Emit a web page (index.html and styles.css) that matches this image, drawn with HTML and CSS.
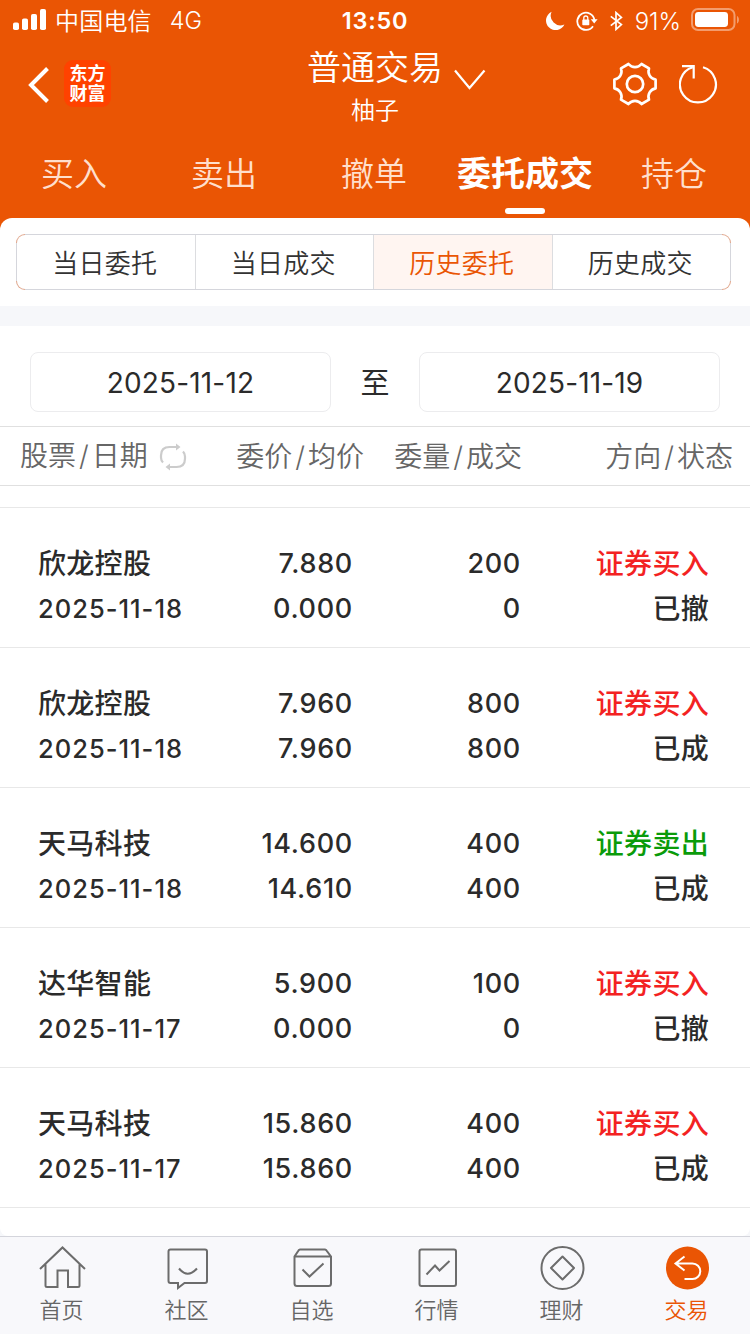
FILE: index.html
```html
<!DOCTYPE html>
<html lang="zh-CN">
<head>
    <meta charset="utf-8">
    <meta name="viewport" content="width=device-width, initial-scale=1.0">
    <title>普通交易</title>
    <link rel="stylesheet" href="styles.css">
</head>

<body>
    <header class="top">
        <div class="status">
            <div class="status-l">
                <svg width="34" height="22" viewBox="0 0 34 22" fill="#fff"><rect x="0" y="13.5" width="6" height="7.5" rx="1.8"/><rect x="9" y="9.5" width="6" height="11.5" rx="1.8"/><rect x="18" y="5" width="6" height="16" rx="1.8"/><rect x="27" y="0" width="6" height="21" rx="1.8"/></svg>
                <span class="carrier">中国电信</span>
                <span class="net">4G</span>
            </div>
            <span class="clock">13:50</span>
            <div class="status-r">
                <svg class="moon" width="20" height="20" viewBox="0 0 20 20"><path d="M6.6 .8A9.600 9.600 0 1 0 19.400 13.400A9.600 9.600 0 0 1 6.600 .8z" fill="#fff"/></svg>
                <svg class="lock" width="22" height="20" viewBox="0 0 22 20" fill="none" stroke="#fff" stroke-width="1.8"><path d="M17 15.200A8.600 8.600 0 1 1 18.400 9"/><path d="M14.800 8.200h6.800l-3.400 4.400z" fill="#fff" stroke="none"/><rect x="6.300" y="8.600" width="7" height="5.600" rx=".8" fill="#fff" stroke="none"/><path d="M7.800 9V7a2 2 0 0 1 4 0v2" stroke-width="1.3"/></svg>
                <svg class="bt" width="13" height="20" viewBox="0 0 13 20" fill="none" stroke="#fff" stroke-width="1.7"><path d="M.8 5.400l10.600 8.200-5.400 4.800V1.600l5.400 4.800L.8 14.600"/></svg>
                <span class="pct">91%</span>
                <svg width="49" height="24" viewBox="0 0 49 24"><rect x="1" y="1" width="42.500" height="21" rx="6" fill="none" stroke="#fff" stroke-opacity=".42" stroke-width="2"/><rect x="4" y="4" width="33" height="15" rx="3.400" fill="#fff"/><path d="M46 8v7.500c2.600-1 2.600-6.500 0-7.500z" fill="#fff" fill-opacity=".42"/></svg>
            </div>
        </div>
        <div class="nav">
            <div class="nav-l">
                <svg width="22" height="36" viewBox="0 0 22 36" fill="none" stroke="#fff" stroke-width="4"><path d="M19.500 1.500L3 18l16.500 16.500"/></svg>
                <div class="logo"><span>东方</span><span>财富</span></div>
            </div>
            <div class="nav-c">
                <h1>普通交易</h1>
                <p>柚子</p>
                <svg class="caret" width="32" height="22" viewBox="0 0 32 22" fill="none" stroke="#fff" stroke-width="2.200"><path d="M1 1.500L15.500 19 30.500 1.500"/></svg>
            </div>
            <div class="nav-r">
                <svg width="46" height="46" viewBox="-23 -23 46 46" fill="none" stroke="#fff" stroke-width="2.700" stroke-linejoin="round"><circle r="8.200"/><path d="M-6.500 -20C-3 -15.800 3 -15.800 6.500 -20L14 -15.600C12.200 -10.300 15.300 -5.300 20.600 -4.300V4.300C15.300 5.300 12.200 10.300 14 15.600L6.500 20C3 15.800 -3 15.800 -6.500 20L-14 15.600C-12.200 10.300 -15.300 5.300 -20.600 4.300V-4.300C-15.300 -5.300 -12.200 -10.300 -14 -15.600Z"/></svg>
                <svg width="40" height="40" viewBox="0 0 40 40" fill="none" stroke="#fff" stroke-width="2.200"><path d="M24 3.200A18 18 0 1 1 13.800 3.200"/><path d="M3 2.200h11.700V14.500"/></svg>
            </div>
        </div>
        <nav class="tabs">
            <a>买入</a>
            <a>卖出</a>
            <a>撤单</a>
            <a class="on">委托成交</a>
            <a>持仓</a>
        </nav>
    </header>

    <main class="panel">
        <div class="seg">
            <button>当日委托</button>
            <button>当日成交</button>
            <button class="on">历史委托</button>
            <button>历史成交</button>
        </div>
        <div class="gap"></div>
        <div class="dates">
            <div class="date">2025-11-12</div>
            <span>至</span>
            <div class="date">2025-11-19</div>
        </div>
        <div class="thead">
            <div class="h-name">股票<i>/</i>日期
                <svg width="28" height="28" viewBox="0 0 28 28" fill="none" stroke="#ccc" stroke-width="2.200"><path d="M4 19.500Q2 17.500 2 14.500V12.500Q2 4 10.500 4H18M24 8.500Q26 10.500 26 13.500V15.500Q26 24 17.500 24H10"/><path d="M17 .5l4.500 3.500-4.500 3.500zM11 20.500l-4.500 3.500 4.500 3.500z" fill="#ccc" stroke="none"/></svg>
            </div>
            <div class="h-price">委价<i>/</i>均价</div>
            <div class="h-qty">委量<i>/</i>成交</div>
            <div class="h-dir">方向<i>/</i>状态</div>
        </div>
        <ul class="list">
            <li class="row">
                <div class="name"><b>欣龙控股</b><em>2025-11-18</em></div>
                <div class="num">7.880<br>0.000</div>
                <div class="num">200<br>0</div>
                <div class="dir"><b class="buy">证券买入</b><b>已撤</b></div>
            </li>
            <li class="row">
                <div class="name"><b>欣龙控股</b><em>2025-11-18</em></div>
                <div class="num">7.960<br>7.960</div>
                <div class="num">800<br>800</div>
                <div class="dir"><b class="buy">证券买入</b><b>已成</b></div>
            </li>
            <li class="row">
                <div class="name"><b>天马科技</b><em>2025-11-18</em></div>
                <div class="num">14.600<br>14.610</div>
                <div class="num">400<br>400</div>
                <div class="dir"><b class="sell">证券卖出</b><b>已成</b></div>
            </li>
            <li class="row">
                <div class="name"><b>达华智能</b><em>2025-11-17</em></div>
                <div class="num">5.900<br>0.000</div>
                <div class="num">100<br>0</div>
                <div class="dir"><b class="buy">证券买入</b><b>已撤</b></div>
            </li>
            <li class="row">
                <div class="name"><b>天马科技</b><em>2025-11-17</em></div>
                <div class="num">15.860<br>15.860</div>
                <div class="num">400<br>400</div>
                <div class="dir"><b class="buy">证券买入</b><b>已成</b></div>
            </li>
        </ul>
    </main>

    <footer class="bar">
        <a>
            <svg width="48" height="46" viewBox="0 0 48 46"><path d="M2 24L24.500 2.500 47 24M7.500 19.500V40.500q0 1.500 1.500 1.500H19.500V25.500H30V42H40q1.500 0 1.500-1.500V19.500"/></svg>
            首页
        </a>
        <a>
            <svg width="48" height="46" viewBox="0 0 48 46"><path d="M7.500 4.500H42q2 0 2 2V36q0 2-2 2H21.500L15 43V38H7.500q-2 0-2-2V6.500q0-2 2-2M16 23.500q8.500 10.500 18 0"/></svg>
            社区
        </a>
        <a>
            <svg width="48" height="46" viewBox="0 0 48 46"><path d="M6.500 11.500L10.500 5.500Q11 4.500 12 4.500H37q1 0 1.500 1L43 11.500V38.500q0 2.500-2.500 2.500H9Q6.500 41 6.500 38.500ZM6.500 11.500H43M14.500 24.500l7 7L35.500 18.500"/></svg>
            自选
        </a>
        <a>
            <svg width="48" height="46" viewBox="0 0 48 46"><rect x="6.500" y="4.500" width="36.500" height="36.500" rx="2"/><path d="M13.500 29.500L22 20.500 26.500 25.500 36.500 16"/></svg>
            行情
        </a>
        <a>
            <svg width="48" height="46" viewBox="0 0 48 46"><circle cx="24.500" cy="23" r="21"/><path d="M24.500 11.500L36 23 24.500 34.500 13 23Z" stroke-linejoin="round"/></svg>
            理财
        </a>
        <a class="on">
            <svg width="48" height="46" viewBox="0 0 48 46"><circle cx="24.500" cy="23" r="21.500" fill="#ea5504" stroke="none"/><path d="M21.500 11.500L12.500 18.500 21.500 25.500M12.500 18.500H29.500a7.800 7.800 0 0 1 0 15.600H21.500" stroke="#fff"/></svg>
            交易
        </a>
    </footer>
</body>

</html>
```

FILE: styles.css
```css
html, body {
    height: 100%;
}
body {
    margin: 0;
    display: flex;
    flex-direction: column;
    overflow: hidden;
    background: linear-gradient(#ea5504 50%, #f6f7fa 50%);
    color: #2b2b2b;
    font-family: Inter, "Noto Sans CJK SC", sans-serif;
}
svg { display: block; flex: none; }
i, em { font-style: normal; }
h1, p, ul { margin: 0; padding: 0; font-weight: 350; }

.top {
    flex: none;
    height: 218px;
    color: #fff;
}

.status {
    height: 40px;
    display: grid;
    grid-template-columns: 1fr auto 1fr;
    align-items: center;
    font-size: 24px;
}
.status-l, .status-r {
    display: flex;
    align-items: center;
}
.status-l { padding-left: 13px; }
.status-l svg { margin-top: -1px; }
.status-r { justify-content: flex-end; padding-right: 10px; }
.carrier { margin-left: 8px; margin-top: -1px; font-weight: 350; letter-spacing: .2px; }
.net { margin-left: 18px; margin-top: 1px; font-weight: 350; font-size: 23.5px; }
.clock { margin-top: 1px; font-weight: 600; font-size: 23.5px; letter-spacing: .8px; }
.moon { margin-right: 11px; margin-top: 2px; }
.lock { margin-right: 12px; margin-top: 2px; }
.bt { margin-right: 12px; margin-top: 2px; }
.pct { margin-right: 10px; margin-top: 2px; font-weight: 350; }

.nav {
    height: 90px;
    display: grid;
    grid-template-columns: 1fr auto 1fr;
}
.nav-l {
    display: flex;
    align-items: center;
    padding-left: 28px;
    gap: 14px;
}
.nav-l svg { margin-top: -1px; }
.logo {
    width: 47px;
    height: 47px;
    margin-top: -3px;
    box-sizing: border-box;
    border-radius: 9px;
    background: #ff4200;
    display: flex;
    flex-direction: column;
    align-items: center;
    justify-content: center;
    font-size: 18px;
    line-height: 20px;
    font-weight: 700;
}
.nav-c {
    position: relative;
    padding-top: 1px;
    text-align: center;
}
.nav-c h1 {
    font-size: 34px;
    line-height: 54px;
}
.nav-c p {
    font-size: 24px;
    line-height: 32px;
}
.caret {
    position: absolute;
    left: 147px;
    top: 29px;
}
.nav-r {
    display: flex;
    align-items: center;
    justify-content: flex-end;
    gap: 21px;
    padding: 0 31px 2px 0;
}

.tabs {
    height: 88px;
    display: flex;
}
.tabs a {
    flex: 1;
    display: flex;
    flex-direction: column;
    align-items: center;
    font-size: 33px;
    line-height: 88px;
    height: 86px;
    margin-left: -1px;
    margin-right: 1px;
    font-weight: 350;
    white-space: nowrap;
    color: #ffdfcc;
}
.tabs .on {
    margin: 0;
    font-size: 34px;
    font-weight: 700;
    color: #fff;
}
.tabs .on:after {
    content: "";
    flex: none;
    width: 40px;
    height: 6px;
    margin-top: -10px;
    border-radius: 3px;
    background: #fff;
}

.panel {
    flex: 1;
    min-height: 0;
    background: #fff;
    border-radius: 12px 12px 8px 8px;
    padding-top: 16px;
}
/* grey outline, orange only on the rounded corners */
.seg {
    display: flex;
    height: 56px;
    margin: 0 19px 16px 16px;
    box-sizing: border-box;
    border: 1px solid transparent;
    border-radius: 9px;
    background:
        linear-gradient(#fff, #fff) padding-box,
        linear-gradient(#d5d6dc, #d5d6dc) center / 100% 38px no-repeat border-box,
        linear-gradient(90deg, #e0a58a 9px, #d5d6dc 9px calc(100% - 9px), #e0a58a calc(100% - 9px)) border-box;
    overflow: hidden;
}
.seg button {
    flex: 1;
    padding: 0 2px 2px 0;
    border: 0;
    border-left: 1px solid #dcdde0;
    background: none;
    color: #333;
    font: 350 26px Inter, "Noto Sans CJK SC", sans-serif;
    letter-spacing: .3px;
}
.seg button:first-child { border-left: 0; }
.seg .on {
    background: #fff5f1;
    color: #ea5504;
}
.gap {
    height: 20px;
    background: #f6f7fa;
}
.dates {
    display: flex;
    align-items: center;
    height: 100px;
    padding: 12px 30px 0;
    box-sizing: border-box;
}
.dates span {
    flex: 1;
    padding-top: 4px;
    text-align: center;
    font-size: 29px;
    line-height: 60px;
}
.date {
    width: 301px;
    height: 60px;
    box-sizing: border-box;
    border: 1px solid #ececee;
    border-radius: 8px;
    text-align: center;
    font-size: 28px;
    line-height: 60px;
    letter-spacing: .15px;
}

.thead {
    display: flex;
    height: 60px;
    box-sizing: border-box;
    border-top: 1px solid #e0e0e0;
    border-bottom: 1px solid #e0e0e0;
    padding: 0 17px 0 20px;
    font-size: 28px;
    line-height: 61px;
    font-weight: 350;
    color: #666;
    white-space: nowrap;
}
.thead i { margin: 0 3px; }
.h-name {
    width: 188px;
    display: flex;
    align-items: center;
    padding-top: 1px;
}
.h-name svg { margin: 0 0 0 11px; }
.h-price { width: 156px; text-align: right; }
.h-qty { width: 158px; text-align: right; }
.h-dir { flex: 1; text-align: right; }

.list {
    list-style: none;
    margin-top: 21px;
    border-top: 1px solid #e8e8e8;
}
.row {
    display: grid;
    grid-template-columns: 162px 153px 168px 188px;
    height: 140px;
    padding: 34px 0 0 38px;
    box-sizing: border-box;
    border-bottom: 1px solid #e8e8e8;
    font-size: 28px;
    line-height: 45px;
    font-weight: 500;
    white-space: nowrap;
}
.row b {
    display: block;
    font-weight: 500;
    letter-spacing: .3px;
}
.name em {
    display: block;
    margin-top: -1px;
    font-size: 25.5px;
    font-weight: 550;
    letter-spacing: 1px;
}
.num {
    margin-top: -1px;
    text-align: right;
    font-size: 27px;
    font-weight: 550;
    letter-spacing: .7px;
}
.dir { text-align: right; }
.dir .buy { color: #f32222; }
.dir .sell { color: #0a9b0a; }

.bar {
    flex: none;
    display: flex;
    height: 98px;
    box-sizing: border-box;
    border-top: 1px solid #d4d5dc;
    background: #f8f8fb;
}
.bar a {
    flex: 1;
    display: flex;
    flex-direction: column;
    align-items: center;
    padding: 8px 2px 0 0;
    font-size: 22px;
    line-height: 38px;
    font-weight: 350;
    color: #666;
}
.bar svg {
    fill: none;
    stroke: #6c6c6c;
    stroke-width: 2;
}
.bar .on { color: #ea5504; }
```
